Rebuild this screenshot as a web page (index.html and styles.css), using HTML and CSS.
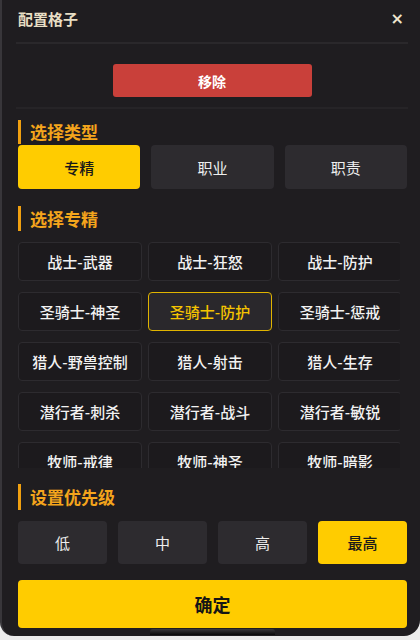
FILE: index.html
```html
<!DOCTYPE html>
<html lang="zh">
<head>
<meta charset="utf-8">
<link rel="stylesheet" href="styles.css">
</head>
<body>
<div class="panel">
  <div class="header">
    <span class="title">配置格子</span>
    <span class="close">×</span>
  </div>
  <div class="remove-row">
    <button class="btn-remove">移除</button>
  </div>
  <div class="content">
    <div class="section-title">选择类型</div>
    <div class="type-row">
      <button class="opt opt-active">专精</button>
      <button class="opt">职业</button>
      <button class="opt">职责</button>
    </div>
    <div class="section-title st-spec">选择专精</div>
    <div class="grid-view">
      <div class="grid">
        <div class="cell">战士-武器</div>
        <div class="cell">战士-狂怒</div>
        <div class="cell">战士-防护</div>
        <div class="cell">圣骑士-神圣</div>
        <div class="cell cell-active">圣骑士-防护</div>
        <div class="cell">圣骑士-惩戒</div>
        <div class="cell">猎人-野兽控制</div>
        <div class="cell">猎人-射击</div>
        <div class="cell">猎人-生存</div>
        <div class="cell">潜行者-刺杀</div>
        <div class="cell">潜行者-战斗</div>
        <div class="cell">潜行者-敏锐</div>
        <div class="cell">牧师-戒律</div>
        <div class="cell">牧师-神圣</div>
        <div class="cell">牧师-暗影</div>
      </div>
    </div>
    <div class="section-title st-prio">设置优先级</div>
    <div class="prio-row">
      <button class="opt">低</button>
      <button class="opt">中</button>
      <button class="opt">高</button>
      <button class="opt opt-active">最高</button>
    </div>
    <button class="btn-confirm">确定</button>
  </div>
  <div class="home-bar"></div>
</div>
</body>
</html>
```

FILE: styles.css
```css
* { box-sizing: border-box; }
html, body { margin: 0; padding: 0; }
body {
  background: #ececec;
  font-family: "Noto Sans CJK SC", "Noto Sans", sans-serif;
  width: 420px;
  height: 640px;
  overflow: hidden;
}
button {
  font-family: inherit;
  border: none;
  padding: 0;
  cursor: pointer;
}
.panel {
  position: relative;
  width: 420px;
  height: 636px;
  background: #1f1d20;
  border-left: 2px solid #38363a;
  border-radius: 0 0 16px 14px;
  overflow: hidden;
}
.header {
  height: 44px;
  margin: 0 12px 0 14px;
  padding: 0 2px;
  border-bottom: 2px solid #2a282b;
  display: flex;
  justify-content: space-between;
  align-items: center;
  padding-bottom: 4px;
}
.title {
  font-size: 15px;
  font-weight: 700;
  color: #e8dec4;
  line-height: 20px;
}
.close {
  font-size: 16px;
  font-weight: 700;
  color: #efe6cf;
  line-height: 20px;
  font-family: "DejaVu Sans", sans-serif;
  margin-right: 2px;
}
.remove-row {
  margin: 0 12px 0 14px;
  padding: 20px 0 10px;
  border-bottom: 2px solid #262427;
  display: flex;
  justify-content: center;
}
.btn-remove {
  width: 199px;
  height: 33px;
  background: #c9403a;
  color: #fff;
  font-size: 14px;
  font-weight: 700;
  border-radius: 3px;
  margin-left: 0;
}
.content {
  padding: 0 13px 0 16px;
  display: flex;
  flex-direction: column;
}
.section-title {
  margin-top: 11px;
  height: 24px;
  border-left: 3px solid #f0a010;
  padding-left: 9px;
  font-size: 17px;
  font-weight: 700;
  color: #f4a51c;
  line-height: 24px;
}
.st-spec { margin-top: 17px; height: 25px; line-height: 25px; }
.st-prio { margin-top: 16px; height: 26px; line-height: 26px; }
.type-row {
  margin-top: 1px;
  display: grid;
  grid-template-columns: repeat(3, 1fr);
  gap: 11px;
  height: 44px;
}
.opt {
  background: #2d2b2f;
  color: #eeeeee;
  font-size: 15px;
  border-radius: 4px;
  height: 100%;
}
.opt-active {
  background: #ffcc00;
  color: #1a1a1a;
  font-weight: 500;
}
.grid-view {
  margin-top: 11px;
  height: 226px;
  width: 382px;
  overflow: hidden;
}
.grid {
  display: grid;
  grid-template-columns: repeat(3, 124px);
  grid-auto-rows: 39px;
  column-gap: 6px;
  row-gap: 11px;
}
.cell {
  border: 1px solid #2d2b2f;
  border-radius: 4px;
  background: #1c1a1d;
  color: #f2f2f2;
  font-size: 15px;
  font-weight: 500;
  display: flex;
  align-items: center;
  justify-content: center;
  white-space: nowrap;
}
.cell-active {
  border: 1.5px solid #e0b400;
  background: #2a282c;
  color: #f5c400;
}
.prio-row {
  margin-top: 11px;
  display: grid;
  grid-template-columns: repeat(4, 1fr);
  gap: 11px;
  height: 43px;
}
.btn-confirm {
  margin-top: 16px;
  height: 48px;
  background: #ffcc00;
  color: #151515;
  font-size: 18px;
  font-weight: 700;
  border-radius: 4px;
}
.home-bar {
  position: absolute;
  left: 148px;
  top: 629px;
  width: 125px;
  height: 6px;
  border-radius: 3px 3px 0 0;
  background: linear-gradient(#3a383c, #0a0a0a);
}
```
